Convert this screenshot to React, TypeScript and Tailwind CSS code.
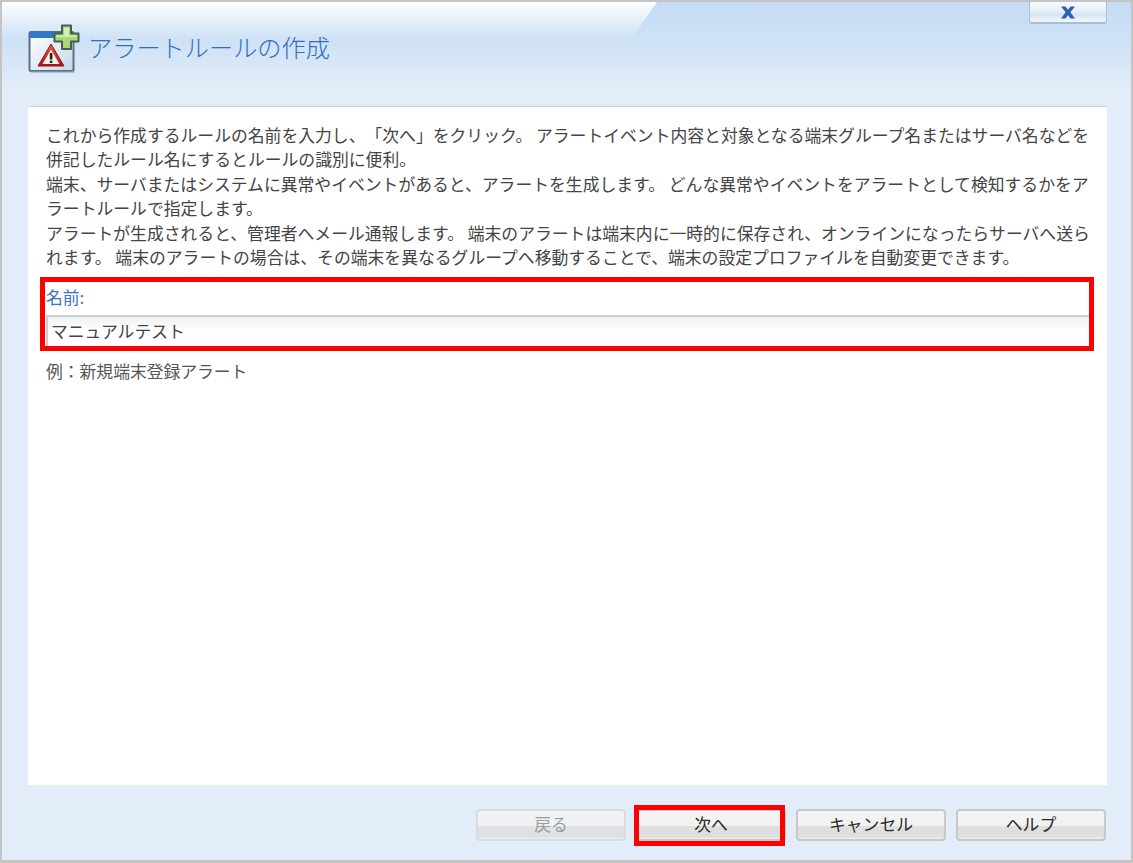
const font = { fontFamily: '"Noto Sans CJK JP", "Noto Sans", sans-serif' };

function HeaderIcon() {
  return (
    <svg width="52" height="50" viewBox="0 0 52 50" className="shrink-0">
      <defs>
        <linearGradient id="pane" x1="0" y1="0" x2="1" y2="1">
          <stop offset="0" stopColor="#ffffff" />
          <stop offset="1" stopColor="#c3d9ec" />
        </linearGradient>
        <linearGradient id="tri" x1="0" y1="0" x2="0" y2="1">
          <stop offset="0" stopColor="#ee5a50" />
          <stop offset="1" stopColor="#a81010" />
        </linearGradient>
      </defs>
      <rect x="1.5" y="8" width="44" height="39" rx="1.5" fill="url(#pane)" stroke="#5d6f82" strokeWidth="2" />
      <rect x="2" y="8" width="43" height="6" fill="#2f78cc" />
      <rect x="3" y="47" width="44" height="2" fill="#9aa6b2" opacity="0.6" />
      <path d="M23 20 L36 42 H10 Z" fill="url(#tri)" stroke="#9c1414" strokeWidth="1" strokeLinejoin="round" />
      <path d="M23 25.5 L31.5 40 H14.5 Z" fill="#f7f3ea" />
      <rect x="21.8" y="29" width="2.6" height="6.5" fill="#222" />
      <rect x="21.8" y="36.6" width="2.6" height="2.4" fill="#222" />
      <path
        d="M34 1.5 H43 V9.5 H50.5 V17.5 H43 V25 H34 V17.5 H26.5 V9.5 H34 Z"
        fill="#a8d878"
        stroke="#4c5c52"
        strokeWidth="2"
        strokeLinejoin="round"
      />
      <path d="M36 3.5 H41 V11.5 H48.5 V13 H28.5 V11.5 H36 Z" fill="#d4efb0" />
    </svg>
  );
}

function CloseGlyph() {
  return (
    <svg width="16" height="13" viewBox="0 0 16 13">
      <path d="M1 0.5 H5.5 L8 3.8 L10.5 0.5 H15 L10.4 6.3 L15 12.5 H10.5 L8 9 L5.5 12.5 H1 L5.6 6.3 Z" fill="#2a62b4" />
    </svg>
  );
}

function Button({ label, disabled }: { label: string; disabled?: boolean }) {
  return (
    <button
      className={`relative w-[150px] h-[32px] rounded-[4px] border-2 overflow-hidden bg-[linear-gradient(to_bottom,#f4f4f4_0%,#f1f1f1_52%,#dfdfdf_54%,#dedede_92%,#f3f3f3_100%)] text-[16.8px] leading-[24px] pb-[3px] ${
        disabled ? "border-[#d5d9de] text-[#8a8a8a] opacity-80" : "border-[#c8c8c8] text-[#2a2a2a]"
      }`}
    >
      {label}
    </button>
  );
}

const lines = [
  "これから作成するルールの名前を入力し、「次へ」をクリック。 アラートイベント内容と対象となる端末グループ名またはサーバ名などを",
  "併記したルール名にするとルールの識別に便利。",
  "端末、サーバまたはシステムに異常やイベントがあると、アラートを生成します。 どんな異常やイベントをアラートとして検知するかをア",
  "ラートルールで指定します。",
  "アラートが生成されると、管理者へメール通報します。 端末のアラートは端末内に一時的に保存され、オンラインになったらサーバへ送ら",
  "れます。 端末のアラートの場合は、その端末を異なるグループへ移動することで、端末の設定プロファイルを自動変更できます。",
];

export default function App() {
  return (
    <div
      className="relative w-[1133px] h-[863px] overflow-hidden border-x-2 border-t-2 border-b-[3px] border-[#c4c4c4] bg-[#e3edf9] flex flex-col [text-spacing-trim:space-all]"
      style={font}
    >
      <div className="relative h-[104px] shrink-0 pl-[26px] pr-[24px] pt-[20px] flex items-start gap-[8px] bg-[linear-gradient(to_bottom,#c4dcf3_0%,#cfe2f6_40%,#e3edf9_85%,#e3edf9_100%)]">
        <div className="absolute left-0 top-0 w-[655px] h-[38px] bg-[linear-gradient(to_bottom,#ffffff_0%,rgba(255,255,255,0.75)_25%,rgba(255,255,255,0)_100%)] [clip-path:polygon(0_0,100%_0,96%_100%,0_100%)]" />
        <div className="relative z-10 mt-[2px]">
          <HeaderIcon />
        </div>
        <h1 className="relative z-10 mt-[7px] text-[24.2px] leading-[36px] font-light text-[#2f6fc0]">
          アラートルールの作成
        </h1>
        <div className="absolute z-10 right-[24px] top-0 w-[78px] h-[22px] rounded-b-[3px] border-x border-b-2 border-[#a8bdd6] bg-[linear-gradient(to_bottom,#f6f9fd_0%,#e6eef8_50%,#d6e3f2_60%,#f4f8fd_100%)] flex items-center justify-center">
          <CloseGlyph />
        </div>
      </div>

      <main className="relative ml-[26px] mr-[24px] h-[679px] shrink-0 bg-white border-t border-[#cfd3d8] pl-[18px] pr-[16px] pt-[16px] text-[#444444]">
        <div className="text-[16.82px] leading-[24.4px]">
          {lines.map((l) => (
            <div key={l} className="whitespace-nowrap">
              {l}
            </div>
          ))}
        </div>
        <div className="mt-[16px] text-[16.8px] leading-[24px] text-[#3d6fc4]">名前:</div>
        <div className="mt-[6px] h-[31px] border-t-2 border-l-2 border-[#ccd0da] bg-[linear-gradient(to_bottom,#eef2f2_0%,#ffffff_45%)] pl-[3px] text-[16.8px] leading-[28px] text-[#444444]">
          マニュアルテスト
        </div>
        <div className="mt-[13px] text-[16.8px] leading-[24px] text-[#555555]">例：新規端末登録アラート</div>
      </main>

      <footer className="flex justify-end gap-[10px] pr-[25px] pt-[24px]">
        <Button label="戻る" disabled />
        <Button label="次へ" />
        <Button label="キャンセル" />
        <Button label="ヘルプ" />
      </footer>

      <div className="absolute left-[38px] top-[275px] w-[1054px] h-[74px] border-[5px] border-[#ff0000]" />
      <div className="absolute left-[632px] top-[803px] w-[151px] h-[41px] border-[5px] border-[#ff0000]" />
    </div>
  );
}
